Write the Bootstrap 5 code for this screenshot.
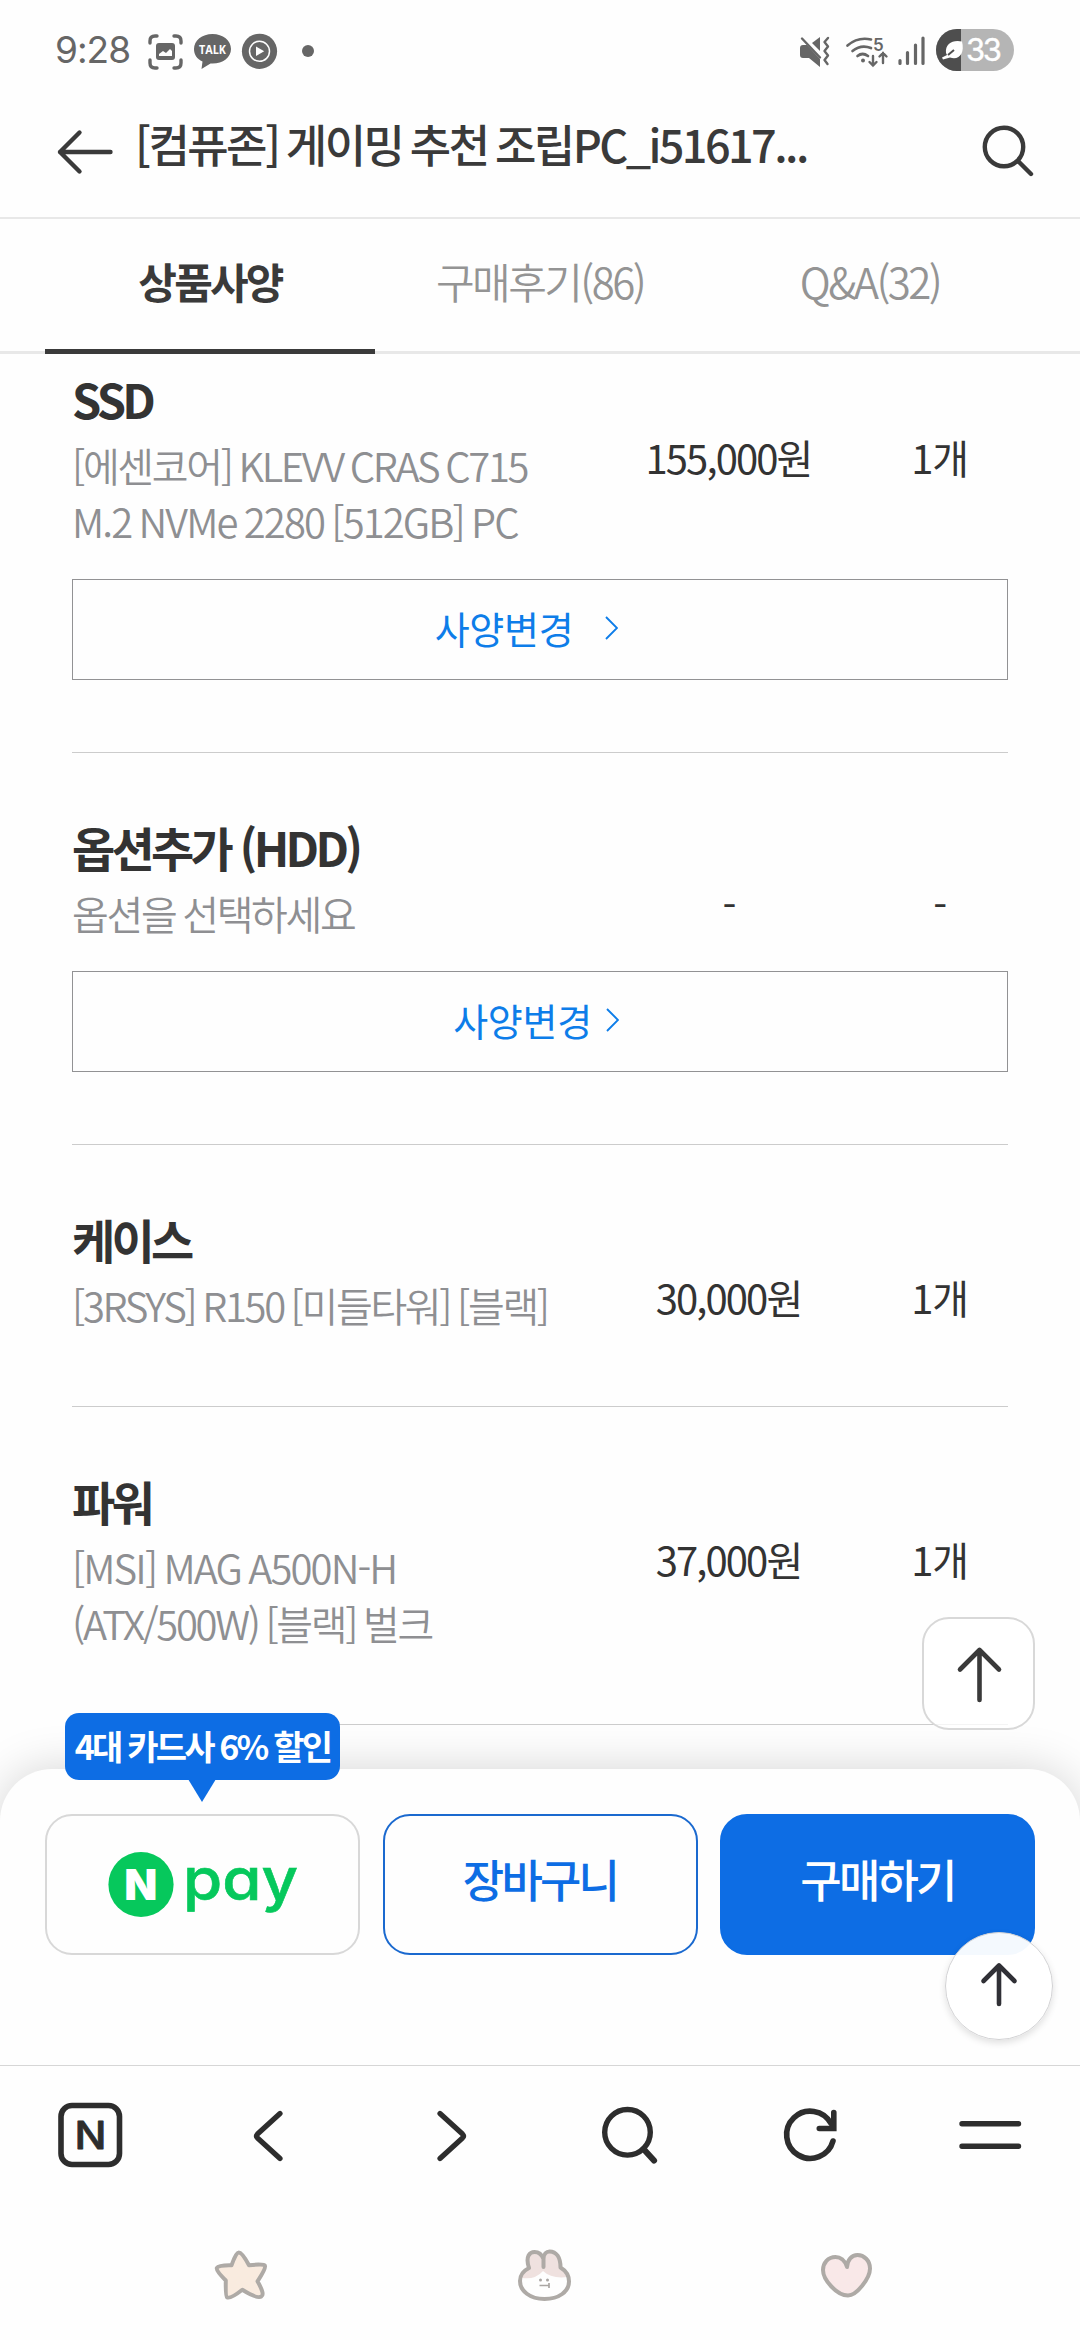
<!DOCTYPE html>
<html lang="ko">
<head>
<meta charset="utf-8">
<meta name="viewport" content="width=device-width, initial-scale=1">
<title>컴퓨존 상품사양</title>
<link rel="stylesheet" href="https://cdn.jsdelivr.net/npm/bootstrap@5.3.0/dist/css/bootstrap.min.css">
<style>
body{width:1080px;height:2340px;background:#fefefe;color:#333;font-family:"Noto Sans CJK KR",sans-serif;overflow:hidden}
svg{display:block;flex:none}
.statusbar{height:84px;padding:0 0 0 55px;color:#666}
.clock{font:400 37px/100px Inter,sans-serif;letter-spacing:-1px;width:93px;height:102px}
.topbar{height:135px;border-bottom:2px solid #e8e8e8;padding:0 45px 0 56px}
.title{font-size:45px;font-weight:500;line-height:60px;letter-spacing:-2.58px;word-spacing:-2.5px;color:#3a3a3a;padding-bottom:14px;margin-left:22px}
.tabs{height:135px;border-bottom:3px solid #e8e8e8;padding:0 45px}
.tab-item{height:135px;font-size:42px;font-weight:350;line-height:123px;letter-spacing:-2.55px;color:#949494}
.tab-item.active{font-weight:700;color:#3a3a3a;border-bottom:5px solid #3a3a3a;letter-spacing:-2.8px}
.specs{height:1415px;padding:14px 72px 0}
.spec{border-bottom:1px solid #ccc;padding-bottom:72px;margin-bottom:63px}
.spec:last-child{margin-bottom:0}
.spec-name{width:518px}
.spec h2{font-size:47px;font-weight:700;line-height:62px;letter-spacing:-3.7px;margin:0 0 7px;white-space:nowrap}
.spec p{font-size:40px;font-weight:350;line-height:56px;letter-spacing:-2.35px;word-spacing:-2px;color:#8e8f92;margin:0 0 1px;white-space:nowrap}
.latin{letter-spacing:-1.9px}
.price,.qty{font-size:40px;line-height:56px;padding-top:61px;letter-spacing:-1.9px}
.price{width:277px}
.qty{width:141px;letter-spacing:-1.2px;padding-left:4px}
.dash{padding-top:60px}
.change{height:101px;margin-top:29px;border:1px solid #929294;border-radius:0;font-size:38px;line-height:56px;letter-spacing:-.3px;color:#0d7de9;padding:0 8px 3px 0;gap:14px}
.change.wide{gap:32px;padding-right:27px}
.sheet{height:296px;border-radius:52px 52px 0 0;background:#fefefe;box-shadow:0 0 46px rgba(0,0,0,.17);padding:45px 45px 0}
.buy-btn{height:141px;border:2px solid #d8d8d8;border-radius:27px;font-size:45px;font-weight:500;letter-spacing:-2.8px;padding:0 0 11px;color:#0d6de4;background:#fefefe}
.buy-btn.cart{border-color:#1a69cf}
.buy-btn.now{border-color:#0d6de4;background:#0d6de4;color:#fff}
.buy-btn.npay{padding:0}
.promo{left:65px;top:-56px;width:275px;height:67px;border-radius:14px;background:#0d6de4;color:#fff;font-size:34px;font-weight:700;line-height:66px;letter-spacing:-2.8px;white-space:nowrap}
.promo-tip{left:188px;top:10px}
.to-top{left:922px;top:1617px;width:113px;height:113px;border:2px solid #d8d8d8;border-radius:27px;background:rgba(255,255,255,.78);z-index:3}
.scroll-up{left:945px;top:1932px;width:108px;height:108px;border:1px solid #d2d2d4;border-radius:50%;background:rgba(255,255,255,.955);box-shadow:0 3px 7px rgba(0,0,0,.12);z-index:4}
.bottom-nav{height:137px;border-top:1px solid #d6d6d6;background:#fefefe;z-index:2}
.soft-keys{height:138px;background:#fefefe;z-index:2;padding-left:89px}
</style>
<script src="https://cdn.jsdelivr.net/npm/bootstrap@5.3.0/dist/js/bootstrap.bundle.min.js"></script>
</head>
<body class="position-relative d-flex flex-column">

<div class="statusbar d-flex justify-content-between align-items-start">
  <div class="d-flex align-items-start">
    <span class="clock">9:28</span>
    <svg width="168" height="84" viewBox="148 0 168 84">
      <g fill="none" stroke="#666" stroke-width="3.4" stroke-linecap="round"><path d="M150 43v-2q0-5 5-5h2M174 36h2q5 0 5 5v2M181 60v3q0 5-5 5h-2M157 68h-2q-5 0-5-5v-3"/></g>
      <rect x="156" y="43" width="19" height="17" rx="3" fill="#666"/><path d="M159 56v-2l4-3 3 2 4-4 2 2v5z" fill="#fefefe"/>
      <path d="M212.500 34c10.500 0 18.500 6.500 18.500 15s-8 14.500-18.500 14.500l-2-.1L201.500 69l1-7.500C197 59 194 54.500 194 49c0-8.500 8-15 18.500-15z" fill="#666"/>
      <text x="199" y="54.300" font-family="Open Sans, sans-serif" font-size="13" font-weight="700" fill="#fefefe" textLength="27" lengthAdjust="spacingAndGlyphs">TALK</text>
      <ellipse cx="259.500" cy="51.300" rx="17.600" ry="17.600" fill="#666"/><circle cx="259.500" cy="51.300" r="10" fill="none" stroke="#fefefe" stroke-width="1.500"/><path d="M256 46.500v9.600l8.200-4.800z" fill="#fefefe"/>
      <circle cx="308" cy="51" r="6" fill="#666"/>
    </svg>
  </div>
  <svg width="282" height="84" viewBox="798 0 282 84">
    <g fill="#666"><path d="M803 45h4l13 14v8l-11-9h-6q-3 0-3-3v-7q0-3 3-3z"/><path d="M812 43l8-6v14z"/></g>
    <g fill="none" stroke="#666" stroke-width="2.400" stroke-linecap="round" stroke-linejoin="round"><path d="M802 38.500l18 19M828 38l-3.500 4 3.500 4.500-3.500 4.500 3.500 4.500-3.500 4.500 3 4"/></g>
    <g fill="none" stroke="#666" stroke-width="2.700" stroke-linecap="round"><path d="M847.500 45.500q10.500-9 23.500-6M852.500 51q8.500-7 18.500-3M857.500 56q5-4 10.500 0"/><path d="M873 56v9.500M869.500 62l3.500 3.500 3.500-3.500M883 63v-10M879.500 56.500l3.500-3.500 3.500 3.500" stroke-width="2.400"/></g>
    <circle cx="863" cy="60.500" r="2" fill="#666"/>
    <text x="873" y="50.500" font-family="Inter, sans-serif" font-size="17" font-weight="600" fill="#666">5</text>
    <g stroke="#666" stroke-width="3.200" stroke-linecap="round"><path d="M900 60.500v3M907.500 52.500v11M915.500 45v18.500M923 38v25.500"/></g>
    <rect x="936" y="29" width="78" height="42" rx="21" fill="#b5b5b5"/><path d="M961 29h-4a21 21 0 0 0 0 42h4z" fill="#4e4e4e"/>
    <path d="M962 41.500c-9-2-17 2-16 11.500l1 2-5 2.500 1 2 7-2c9 3 15-4 12-16z" fill="#fff"/><path d="M948 55l6-5" stroke="#4e4e4e" stroke-width="2"/>
    <text x="966" y="61" font-family="Inter, sans-serif" font-size="31" fill="#fff" stroke="#fff" stroke-width=".4" textLength="36">33</text>
  </svg>
</div>

<header class="topbar d-flex align-items-center">
  <svg width="57" height="50" viewBox="56 125 57 50" fill="none" stroke="#3a3a3a" stroke-width="4.400" stroke-linecap="round" stroke-linejoin="round"><path d="M110.500 151H60M79.500 131.500L60 151l19.500 19.500"/></svg>
  <h1 class="title mb-0 text-nowrap">[컴퓨존] 게이밍 추천 조립PC_i51617...</h1>
  <svg class="ms-auto" width="54" height="54" viewBox="980 123 54 54" fill="none" stroke="#3a3a3a" stroke-width="4.400" stroke-linecap="round"><circle cx="1003" cy="146" r="19.200"/><path d="M1017 160l13 13"/></svg>
</header>

<nav class="tabs row g-0">
  <div class="col-4 tab-item active text-center">상품사양</div>
  <div class="col-4 tab-item text-center">구매후기(86)</div>
  <div class="col-4 tab-item text-center">Q&amp;A(32)</div>
</nav>

<main class="specs">
  <section class="spec">
    <div class="d-flex">
      <div class="spec-name"><h2>SSD</h2><p>[에센코어] KLEVV CRAS C715<br><span class="latin">M.2 NVMe 2280 [512GB] PC</span></p></div>
      <div class="price text-center">155,000원</div><div class="qty text-center">1개</div>
    </div>
    <a class="change wide btn w-100 d-flex align-items-center justify-content-center" href="#">사양변경<svg width="13" height="24" viewBox="0 0 13 24" fill="none" stroke="#0d7de9" stroke-width="1.900"><path d="M1 1l11 11L1 23"/></svg></a>
  </section>
  <section class="spec">
    <div class="d-flex">
      <div class="spec-name"><h2>옵션추가 (HDD)</h2><p>옵션을 선택하세요</p></div>
      <div class="price dash text-center">-</div><div class="qty dash text-center">-</div>
    </div>
    <a class="change btn w-100 d-flex align-items-center justify-content-center" href="#">사양변경<svg width="13" height="24" viewBox="0 0 13 24" fill="none" stroke="#0d7de9" stroke-width="1.900"><path d="M1 1l11 11L1 23"/></svg></a>
  </section>
  <section class="spec">
    <div class="d-flex">
      <div class="spec-name"><h2>케이스</h2><p>[3RSYS] R150 [미들타워] [블랙]</p></div>
      <div class="price text-center">30,000원</div><div class="qty text-center">1개</div>
    </div>
  </section>
  <section class="spec">
    <div class="d-flex">
      <div class="spec-name"><h2>파워</h2><p><span class="latin">[MSI] MAG A500N-H</span><br>(ATX/500W) [블랙] 벌크</p></div>
      <div class="price text-center">37,000원</div><div class="qty text-center">1개</div>
    </div>
  </section>
</main>

<section class="sheet position-relative">
  <div class="promo position-absolute text-center">4대 카드사 6% 할인</div>
  <svg class="promo-tip position-absolute" width="28" height="24" viewBox="0 0 28 24"><path d="M0 0h28L14 23z" fill="#0d6de4"/></svg>
  <div class="d-flex" style="gap:22.5px">
    <button class="buy-btn npay btn flex-fill w-100 d-flex align-items-center justify-content-center">
      <svg width="200" height="76" viewBox="104 1847 200 76">
        <circle cx="142" cy="1884.500" r="32.600" fill="#06c85c"/>
        <text x="141.800" y="1900" text-anchor="middle" letter-spacing="0" font-family="Inter, sans-serif" font-weight="900" font-size="43" fill="#fff">N</text>
        <text x="184" y="1899.500" letter-spacing="0" font-family="Inter, sans-serif" font-weight="500" font-size="59" fill="#06c85c" stroke="#06c85c" stroke-width=".6" textLength="115" lengthAdjust="spacingAndGlyphs" style="font-feature-settings:'cv11'">pay</text>
      </svg>
    </button>
    <button class="buy-btn cart btn flex-fill w-100">장바구니</button>
    <button class="buy-btn now btn flex-fill w-100">구매하기</button>
  </div>
</section>

<nav class="bottom-nav position-relative d-flex">
  <svg width="180" height="136" viewBox="0 2066 180 136"><rect x="61" y="2105.500" width="58.500" height="59" rx="11" fill="none" stroke="#2d2d2d" stroke-width="5.600"/><text x="74.500" y="2149" font-family="Inter, sans-serif" font-weight="500" font-size="38" fill="#2d2d2d" stroke="#2d2d2d" stroke-width=".8" stroke-linejoin="round" textLength="32" lengthAdjust="spacingAndGlyphs">N</text></svg>
  <svg width="180" height="136" viewBox="180 2066 180 136" fill="none" stroke="#2d2d2d" stroke-width="5.200" stroke-linecap="round" stroke-linejoin="round"><path d="M280 2113.500l-22.500 20.500q-2 2 0 4l22.500 20.500"/></svg>
  <svg width="180" height="136" viewBox="360 2066 180 136" fill="none" stroke="#2d2d2d" stroke-width="5.200" stroke-linecap="round" stroke-linejoin="round"><path d="M440 2113.500l22.500 20.500q2 2 0 4l-22.500 20.500"/></svg>
  <svg width="180" height="136" viewBox="540 2066 180 136" fill="none" stroke="#2d2d2d" stroke-width="5.400" stroke-linecap="round"><circle cx="627.500" cy="2132.300" r="22.800"/><path d="M643.500 2149l10.500 11.500" stroke-width="6.200"/></svg>
  <svg width="180" height="136" viewBox="720 2066 180 136" fill="none" stroke="#2d2d2d" stroke-width="5.600" stroke-linecap="round" stroke-linejoin="miter"><path d="M833 2141a23.600 23.600 0 1 1-2-17.500"/><path d="M833.800 2112.500v16h-14.500"/></svg>
  <svg width="180" height="136" viewBox="900 2066 180 136" fill="none" stroke="#2d2d2d" stroke-width="5.400" stroke-linecap="round"><path d="M962 2123.700h56.500M962 2146.300h56.500"/></svg>
</nav>
<div class="soft-keys position-relative d-flex">
  <svg width="303" height="138" viewBox="89 2202 303 138"><path d="M238.500 2252.500q3.500-.5 10.500 12.800q15-1.800 16 .5q1.500 2-7.500 15.500q7.500 13 4 15q-4 3-19.200-6.500q-12 9.500-15.300 7.500q-1.500-1-1.200-16.800q-10.500-10.500-9-12.500q2-3 14.700-2.700q4.500-12.800 7-12.800z" fill="#f9ebdf" stroke="#aeaaa6" stroke-width="4" stroke-linejoin="round"/></svg>
  <svg width="303" height="138" viewBox="392 2202 303 138"><path d="M529 2268c-4-12 1-16 5.500-16 5 0 7.500 3 9 7 0-5 3-7.500 6-7.500 7 0 11 6 11 16 5 3 8.500 8 8.500 14 0 10-10 17.500-24.500 17.500S520 2291 520 2281c0-5 3-10 9-13z" fill="#fefefe"/><path d="M529 2268c-4-12 1-16 5.500-16 5 0 7.500 3 9 7 0-5 3-7.500 6-7.500 7 0 11 6 11 16q5 3 7 9.500q-16 2-24.500-6q-8 9-21 7q2-7 7-10z" fill="#efe1df"/><path d="M529 2268c-4-12 1-16 5.500-16 5 0 7.500 3 9 7 0-5 3-7.500 6-7.500 7 0 11 6 11 16 5 3 8.500 8 8.500 14 0 10-10 17.500-24.500 17.500S520 2291 520 2281c0-5 3-10 9-13zM543.500 2258v9" fill="none" stroke="#aeaaa6" stroke-width="4" stroke-linejoin="round" stroke-linecap="round"/><g fill="#aaa6a3"><circle cx="540.500" cy="2280" r="1.500"/><circle cx="547.500" cy="2280" r="1.500"/></g><path d="M539.500 2285.500h10M549 2283v5" stroke="#aaa6a3" stroke-width="1.700"/></svg>
  <svg width="303" height="138" viewBox="695 2202 303 138"><path d="M847 2267c-2-7-7-10-11.500-10-7.500 0-12.500 6-12.500 13 0 10 14 25.500 25 25.500 8.500 0 22-17 22-27 0-8-6-13.500-12.500-13.500-6 0-10 5-10.500 12z" fill="#f9e8e8" stroke="#aeaaa6" stroke-width="4" stroke-linejoin="round"/></svg>
</div>

<a class="to-top position-absolute d-flex align-items-center justify-content-center" href="#"><svg width="48" height="60" viewBox="954 1643 48 60" fill="none" stroke="#3a3a3a" stroke-width="4.600" stroke-linecap="round" stroke-linejoin="round"><path d="M978.500 1699v-50M959 1668.500l19.500-19.500 19.500 19.500"/></svg></a>
<a class="scroll-up position-absolute d-flex align-items-center justify-content-center" href="#"><svg width="42" height="50" viewBox="978 1962 42 50" fill="none" stroke="#303036" stroke-width="4.600" stroke-linecap="round" stroke-linejoin="round"><path d="M999 2005v-36M983.500 1982l15.500-15.500 15.500 15.500"/></svg></a>
</body>
</html>
